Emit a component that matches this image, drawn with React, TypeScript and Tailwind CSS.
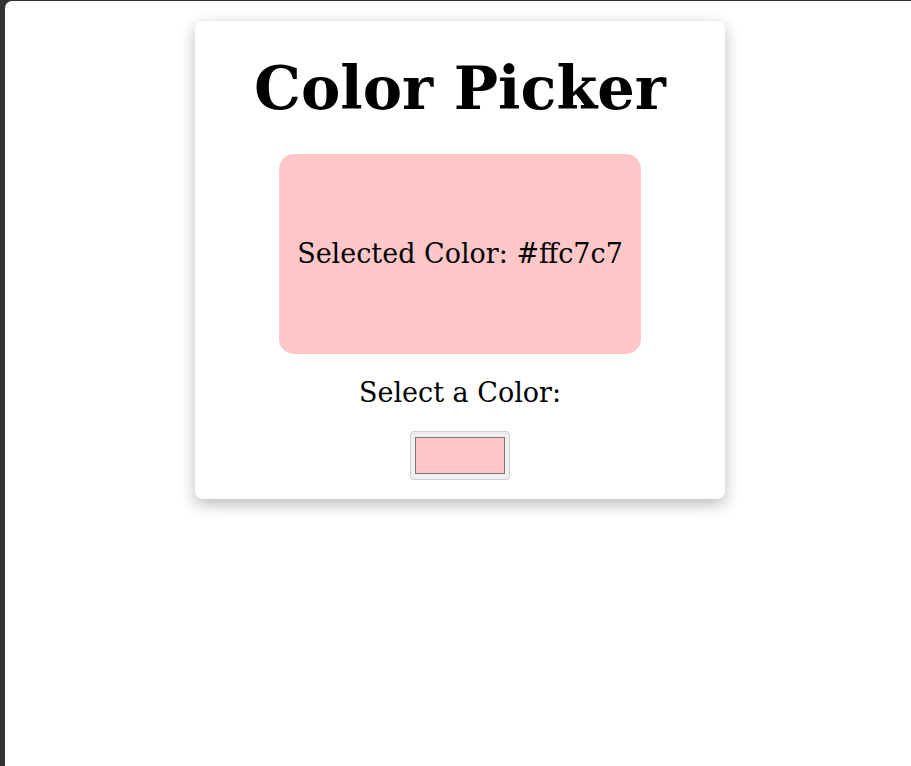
import { useState } from "react";

const App = () => {
    const [color, setColor] = useState("#ffc7c7");

    return (
        <div className="h-screen bg-[#333333] pl-[5px] pt-[1px] font-['DejaVu_Serif',serif] text-black">
            <div className="h-full bg-white rounded-tl-[7px] flex justify-center">
                <div className="mt-[20px] ml-[4px] w-[530px] h-[478px] bg-white rounded-[8px] shadow-[0_5px_16px_rgba(0,0,0,0.28)] flex flex-col items-center">
                    <h1 className="mt-[28px] text-[59px] leading-[80px] font-bold">Color Picker</h1>

                    <div
                        className="mt-[25px] w-[362px] h-[200px] rounded-[15px] flex items-center justify-center"
                        style={{ backgroundColor: color }}>
                        <p className="text-[27px]">Selected Color: {color}</p>
                    </div>

                    <label htmlFor="picker" className="mt-[23px] text-[27px] leading-[32px]">
                        Select a Color:
                    </label>

                    <input
                        id="picker"
                        type="color"
                        value={color}
                        onChange={(e) => setColor(e.target.value)}
                        className="mt-[22px] w-[100px] h-[49px] px-[2px] py-[1px] bg-[#efefef] border border-[#cfcfcf] rounded-[4px] cursor-pointer"
                    />
                </div>
            </div>
        </div>
    );
};

export default App;
